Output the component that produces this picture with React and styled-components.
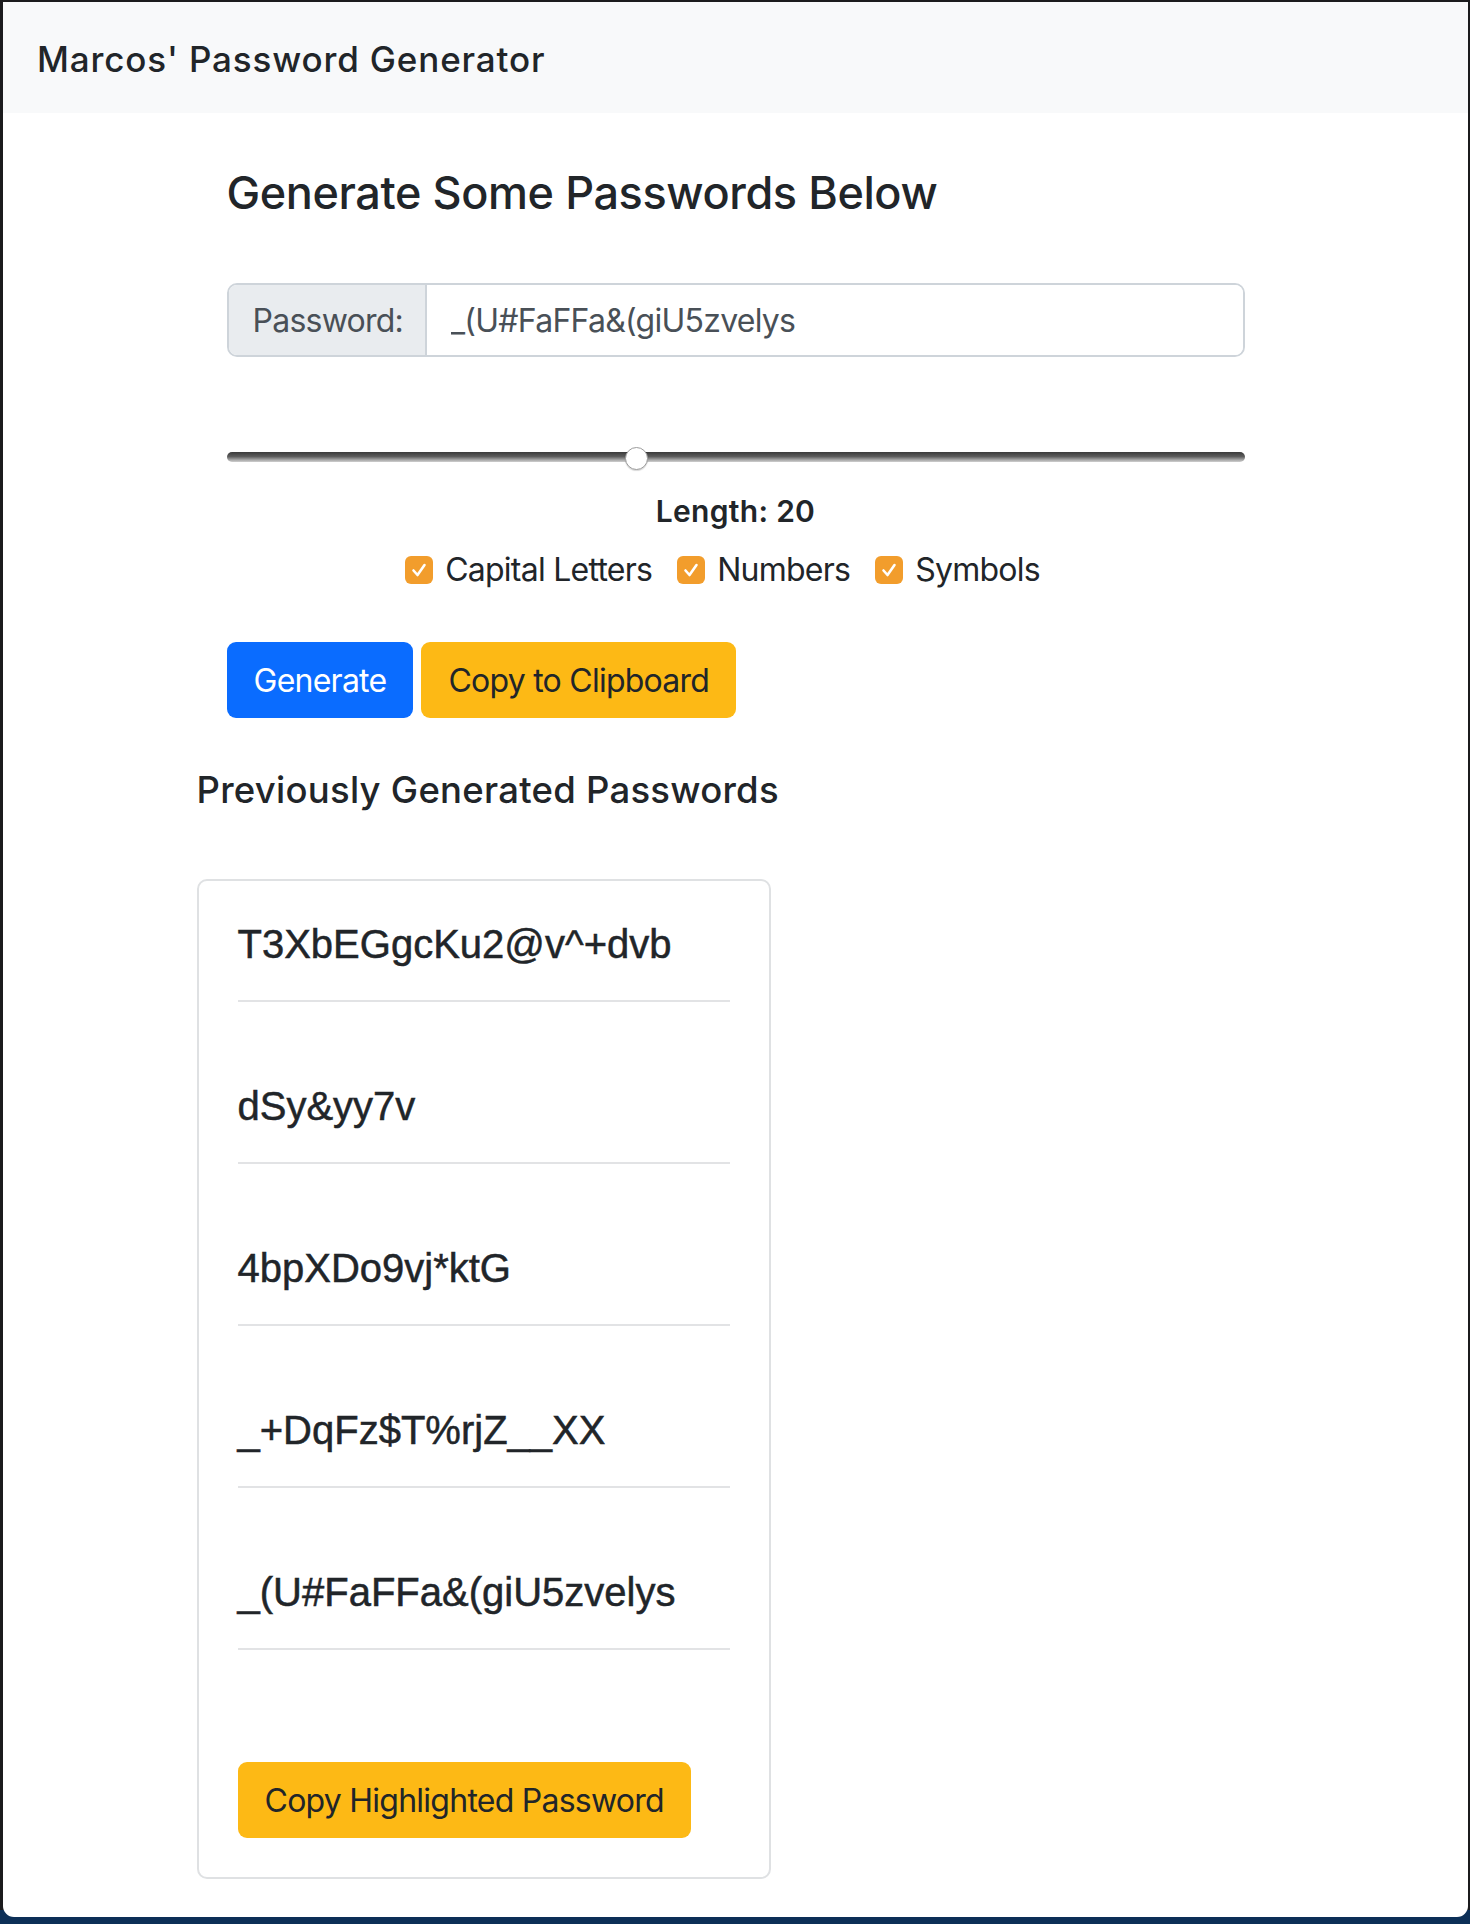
import React from 'react';
import styled, { createGlobalStyle } from 'styled-components';

const GlobalStyle = createGlobalStyle`
  html {
    background: linear-gradient(to top, #0c2f57 0 14px, #1b1b1d 14px);
  }
  body {
    margin: 0;
    font-family: Inter, "Noto Sans", sans-serif;
    color: #212529;
  }
  * {
    box-sizing: border-box;
  }
`;

const history = [
  'T3XbEGgcKu2@v^+dvb',
  'dSy&yy7v',
  '4bpXDo9vj*ktG',
  '_+DqFz$T%rjZ__XX',
  '_(U#FaFFa&(giU5zvelys',
];

const options = ['Capital Letters', 'Numbers', 'Symbols'];

function App() {
  return (
    <>
      <GlobalStyle />
      <StyledWindow>
        <StyledNavBar>
          <StyledBrand>Marcos' Password Generator</StyledBrand>
        </StyledNavBar>
        <StyledContainer>
          <StyledGenerator>
            <StyledTitle>Generate Some Passwords Below</StyledTitle>
            <StyledInputGroup>
              <StyledAddon>Password:</StyledAddon>
              <StyledPasswordInput readOnly value="_(U#FaFFa&(giU5zvelys" />
            </StyledInputGroup>
            <StyledSlider type="range" min={4} max={44} defaultValue={20} />
            <StyledLength>Length: 20</StyledLength>
            <StyledOptions>
              {options.map((name) => (
                <StyledOption key={name}>
                  <StyledBox>
                    <svg width="18" height="18" viewBox="0 0 18 18">
                      <polyline
                        points="3.5,9.5 7.5,14 14.5,4"
                        fill="none"
                        stroke="#fff"
                        strokeWidth="2.6"
                        strokeLinecap="round"
                        strokeLinejoin="round"
                      />
                    </svg>
                  </StyledBox>
                  {name}
                </StyledOption>
              ))}
            </StyledOptions>
            <StyledButtonRow>
              <StyledButton $variant="primary">Generate</StyledButton>
              <StyledButton $variant="warning">Copy to Clipboard</StyledButton>
            </StyledButtonRow>
          </StyledGenerator>

          <StyledSubTitle>Previously Generated Passwords</StyledSubTitle>
          <StyledHistoryCard>
            {history.map((pw) => (
              <StyledHistoryItem key={pw}>{pw}</StyledHistoryItem>
            ))}
            <StyledCopyButton $variant="warning">Copy Highlighted Password</StyledCopyButton>
          </StyledHistoryCard>
        </StyledContainer>
      </StyledWindow>
    </>
  );
}

// 창 (macOS 윈도우 틀)
const StyledWindow = styled.div`
  margin: 2px 2px 7px 3px;
  background: #fff;
  border-radius: 0 0 11px 11px;
  overflow: hidden;
  padding-bottom: 38px;
`;

const StyledNavBar = styled.nav`
  height: 111px;
  padding: 37px 34px 0;
  background: #f8f9fa;
`;

const StyledBrand = styled.div`
  font-size: 35px;
  line-height: 40px;
  font-weight: 500;
  letter-spacing: 0.85px;
`;

const StyledContainer = styled.main`
  width: 1078px;
  margin: 0 auto;
  padding-top: 53px;
`;

// 생성기 영역
const StyledGenerator = styled.section`
  padding: 0 30px;
`;

const StyledTitle = styled.h4`
  margin: 0;
  font-size: 45px;
  line-height: 54px;
  font-weight: 500;
  letter-spacing: -0.4px;
`;

const StyledInputGroup = styled.div`
  display: flex;
  height: 74px;
  margin-top: 63px;
  border: 2px solid #ced4da;
  border-radius: 10px;
  overflow: hidden;
  font-size: 32px;
  letter-spacing: -0.75px;
`;

const StyledAddon = styled.span`
  display: flex;
  align-items: center;
  width: 198px;
  padding: 0 24px;
  background: #e9ecef;
  border-right: 2px solid #ced4da;
  color: #495057;
`;

const StyledPasswordInput = styled.input`
  flex: 1;
  min-width: 0;
  border: none;
  outline: none;
  padding: 0 24px;
  font: inherit;
  letter-spacing: inherit;
  color: #495057;
`;

const StyledSlider = styled.input`
  display: block;
  width: 100%;
  height: 10px;
  margin: 95px 0 0;
  -webkit-appearance: none;
  appearance: none;
  background: transparent;

  &::-webkit-slider-runnable-track {
    height: 10px;
    border-radius: 5px;
    background: linear-gradient(to bottom, #3a3a3a 0%, #5c5c5c 45%, #a9a9a9 80%, #cfcfcf 100%);
  }

  &::-webkit-slider-thumb {
    -webkit-appearance: none;
    width: 23px;
    height: 23px;
    margin-top: -5px;
    border-radius: 50%;
    background: #fff;
    border: 1px solid #9c9c9c;
    box-shadow: 0 1px 1px rgba(0, 0, 0, 0.15);
  }
`;

const StyledLength = styled.div`
  margin-top: 31px;
  text-align: center;
  font-size: 30px;
  line-height: 36px;
  font-weight: 600;
  letter-spacing: 0.3px;
`;

const StyledOptions = styled.div`
  display: flex;
  justify-content: center;
  gap: 25px;
  margin-top: 21px;
  padding-right: 26px;
`;

const StyledOption = styled.label`
  display: flex;
  align-items: center;
  gap: 12px;
  font-size: 32px;
  line-height: 40px;
  letter-spacing: -0.75px;
`;

const StyledBox = styled.span`
  display: flex;
  align-items: center;
  justify-content: center;
  width: 28px;
  height: 28px;
  border-radius: 6px;
  background: #f29d2c;
`;

const StyledButtonRow = styled.div`
  display: flex;
  gap: 8px;
  margin-top: 52px;
`;

const StyledButton = styled.button`
  height: 76px;
  padding: 0 27px;
  border: none;
  border-radius: 9px;
  font-family: inherit;
  font-size: 32px;
  letter-spacing: -0.75px;
  background: ${(p) => (p.$variant === 'primary' ? '#0a6cff' : '#fdb915')};
  color: ${(p) => (p.$variant === 'primary' ? '#fff' : '#212529')};
`;

// 이전 비밀번호 목록
const StyledSubTitle = styled.h5`
  margin: 50px 0 0;
  font-size: 36.5px;
  line-height: 44px;
  font-weight: 500;
  letter-spacing: 0.25px;
`;

const StyledHistoryCard = styled.div`
  width: 574px;
  margin-top: 67px;
  padding: 39px 39px 39px;
  border: 2px solid #dfe1e3;
  border-radius: 10px;
`;

const StyledHistoryItem = styled.div`
  padding-bottom: 32px;
  border-bottom: 2px solid #e2e3e5;
  font-family: "Liberation Sans", Arial, sans-serif;
  font-size: 40px;
  line-height: 48px;
  -webkit-text-stroke: 0.5px #212529;

  & + & {
    padding-top: 80px;
  }
`;

const StyledCopyButton = styled(StyledButton)`
  margin-top: 112px;
`;

export default App;
